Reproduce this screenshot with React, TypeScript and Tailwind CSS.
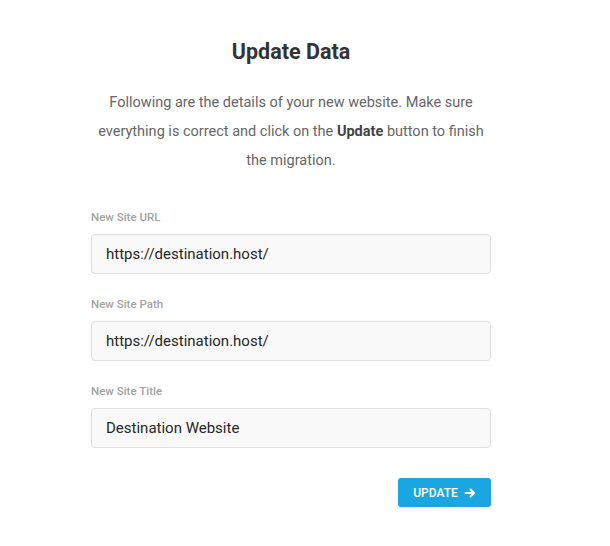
import React from "react";

const fields = [
  { label: "New Site URL", value: "https://destination.host/" },
  { label: "New Site Path", value: "https://destination.host/" },
  { label: "New Site Title", value: "Destination Website" },
];

export default function App() {
  return (
    <div className="min-h-[546px] w-[610px] bg-white font-['Roboto',sans-serif]">
      <div className="ml-[91px] w-[400px] pt-[38px]">
        <h1 className="text-center text-[21.5px] font-bold leading-[28px] text-[#333]">Update Data</h1>
        <p className="mt-[22px] text-center text-[14.5px] leading-[29px] text-[#666]">
          Following are the details of your new website. Make sure everything is correct and click on the{" "}
          <span className="font-bold text-[#444]">Update</span> button to finish the migration.
        </p>
        <div className="mt-[35px] flex flex-col gap-[23px]">
          {fields.map((f) => (
            <div key={f.label} className="flex flex-col">
              <label className="text-[11.5px] font-medium leading-[14px] text-[#a3a3a3]">{f.label}</label>
              <div className="mt-[10px] flex h-[40px] items-center rounded-[4px] border border-[#e0e0e0] bg-[#f9f9f9] px-[14px] text-[15px] font-normal text-[#262626]">
                {f.value}
              </div>
            </div>
          ))}
        </div>
        <div className="mt-[30px] flex justify-end">
          <button className="flex h-[29px] w-[93px] items-center justify-center gap-[6px] rounded-[3px] bg-[#1aa7e1] text-[12px] font-medium text-white">
            UPDATE
            <svg width="12" height="12" viewBox="0 0 12 12" fill="none" stroke="white" strokeWidth="2" strokeLinecap="round" strokeLinejoin="round">
              <path d="M1.5 6h8.5M6.5 2.5 10 6l-3.5 3.5" />
            </svg>
          </button>
        </div>
      </div>
    </div>
  );
}
